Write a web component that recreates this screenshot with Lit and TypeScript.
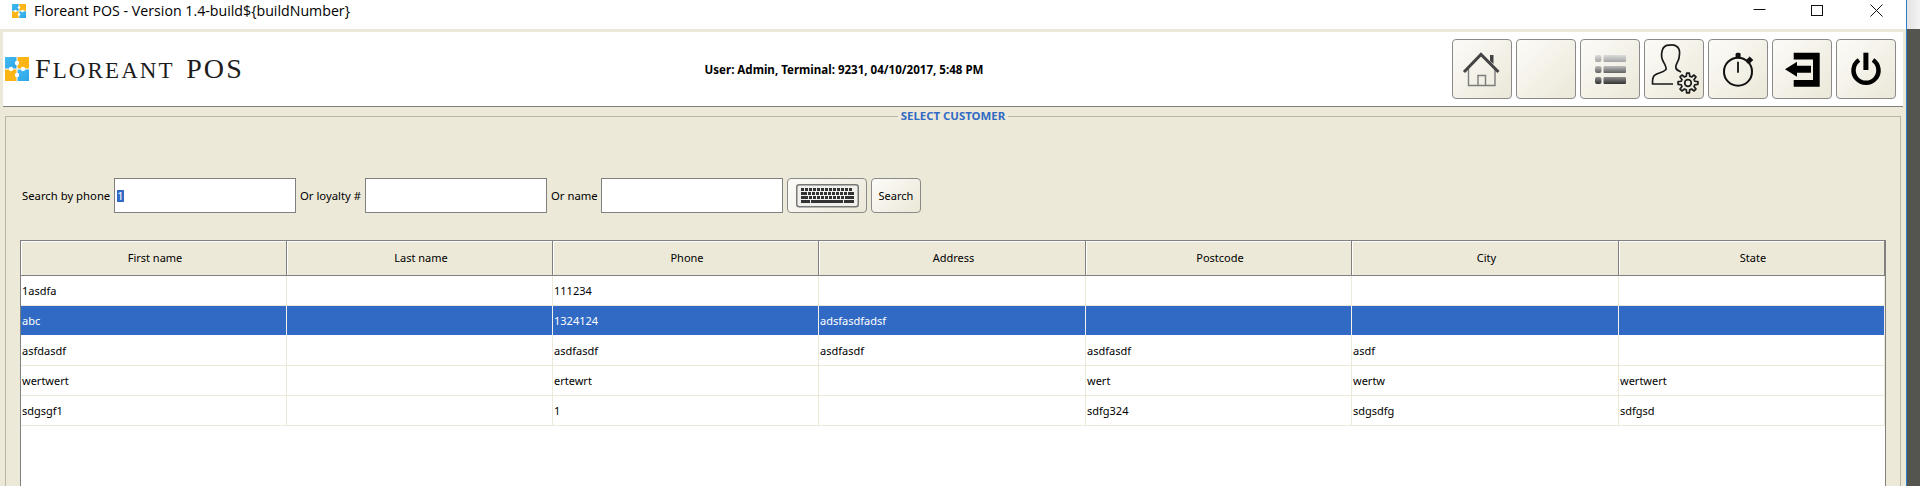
import { LitElement, html, svg, css } from "lit";
import { customElement } from "lit/decorators.js";
import { classMap } from "lit/directives/class-map.js";

const columns = ["First name", "Last name", "Phone", "Address", "Postcode", "City", "State"];

const customers = [
    ["1asdfa", "", "111234", "", "", "", ""],
    ["abc", "", "1324124", "adsfasdfadsf", "", "", ""],
    ["asfdasdf", "", "asdfasdf", "asdfasdf", "asdfasdf", "asdf", ""],
    ["wertwert", "", "ertewrt", "", "wert", "wertw", "wertwert"],
    ["sdgsgf1", "", "1", "", "sdfg324", "sdgsdfg", "sdfgsd"],
];

// gear outline for the user settings icon
function gearPath(cx: number, cy: number, inner: number, outer: number, teeth: number) {
    const points: string[] = [];
    const step = (Math.PI * 2) / teeth;
    for (let i = 0; i < teeth; i++) {
        const a = i * step - Math.PI / 2;
        const corners = [
            [a - step * 0.32, inner],
            [a - step * 0.17, outer],
            [a + step * 0.17, outer],
            [a + step * 0.32, inner],
        ];
        for (const [angle, radius] of corners) {
            points.push(`${(cx + Math.cos(angle) * radius).toFixed(2)} ${(cy + Math.sin(angle) * radius).toFixed(2)}`);
        }
    }
    return "M" + points.join("L") + "Z";
}

const logoMark = (size: number) => html`
    <svg width=${size} height=${size} viewBox="0 0 24 24">
        <defs>
            <linearGradient id="mark-blue" x1="0" y1="0" x2="1" y2="1">
                <stop offset="0" stop-color="#45b9f2"></stop>
                <stop offset="1" stop-color="#2aa5e6"></stop>
            </linearGradient>
        </defs>
        <rect x="0" y="0" width="12" height="12" fill="url(#mark-blue)"></rect>
        <rect x="12" y="0" width="12" height="12" fill="#fdb515"></rect>
        <rect x="0" y="12" width="12" height="12" fill="#fdb515"></rect>
        <rect x="12" y="12" width="12" height="12" fill="url(#mark-blue)"></rect>
        <path d="M12 0V24M0 12H24" stroke="#fff" stroke-width="1"></path>
        <circle cx="12" cy="6" r="2.2" fill="#fff"></circle>
        <circle cx="12" cy="18" r="2.2" fill="#fff"></circle>
        <circle cx="6" cy="12" r="2.2" fill="#fff"></circle>
        <circle cx="18" cy="12" r="2.2" fill="#fff"></circle>
    </svg>
`;

const homeIcon = svg`
    <path d="M16.5 30V46.5H43V30" fill="none" stroke="#7c7c7c" stroke-width="1.4"></path>
    <path d="M26 46.5V36.5H33.5V46.5" fill="none" stroke="#7c7c7c" stroke-width="1.4"></path>
    <path d="M38 16H41.5V25L38 22Z" fill="#444"></path>
    <path d="M12 33L29 15.5L46.5 33" fill="none" stroke="#444" stroke-width="3"></path>
`;

const listIcon = svg`
    <defs>
        <linearGradient id="bar-a" x1="0" y1="0" x2="0" y2="1"><stop offset="0" stop-color="#dcdcdc"></stop><stop offset="1" stop-color="#a4a4a4"></stop></linearGradient>
        <linearGradient id="bar-b" x1="0" y1="0" x2="0" y2="1"><stop offset="0" stop-color="#bdbdbd"></stop><stop offset="1" stop-color="#616161"></stop></linearGradient>
        <linearGradient id="bar-c" x1="0" y1="0" x2="0" y2="1"><stop offset="0" stop-color="#8d8d8d"></stop><stop offset="1" stop-color="#333"></stop></linearGradient>
    </defs>
    <rect x="15" y="16" width="6.5" height="7" rx="2" fill="url(#bar-a)"></rect>
    <rect x="23.5" y="16" width="22.5" height="7" rx="1" fill="url(#bar-a)"></rect>
    <rect x="15" y="27" width="6.5" height="7" rx="2" fill="url(#bar-b)"></rect>
    <rect x="23.5" y="27" width="22.5" height="7" rx="1" fill="url(#bar-b)"></rect>
    <rect x="15" y="38" width="6.5" height="7" rx="2" fill="url(#bar-c)"></rect>
    <rect x="23.5" y="38" width="22.5" height="7" rx="1" fill="url(#bar-c)"></rect>
`;

const userIcon = svg`
    <path d="M29 45H8.5C8.3 40 8.6 37.5 11 36C14 34 19 33.5 22 30.5C22.6 28 21 25.5 19.5 23C17.7 20 17.3 15 18.2 11.5C19.3 7.5 22.5 6 26 6.2C28.5 5.6 31 6 33.5 8C35.8 10 35.7 15.5 35 19C34.3 22.5 32.3 24.5 31.8 27.5C31.5 30.5 33.5 31.5 37 33"
        fill="none" stroke="#1a1a1a" stroke-width="1.7" stroke-linejoin="round"></path>
    <path d=${gearPath(44, 44, 7, 10, 8)} fill="none" stroke="#1a1a1a" stroke-width="1.7" stroke-linejoin="round"></path>
    <circle cx="44" cy="44" r="3.3" fill="none" stroke="#1a1a1a" stroke-width="1.7"></circle>
`;

const timerIcon = svg`
    <circle cx="30" cy="32.7" r="14" fill="none" stroke="#111" stroke-width="2"></circle>
    <rect x="27.6" y="13.7" width="5" height="5.5" rx="1.5" fill="#111"></rect>
    <path d="M39 24L42 21" stroke="#111" stroke-width="1.6"></path>
    <rect x="39.2" y="18.5" width="5" height="5" transform="rotate(45 41.7 21)" fill="#111"></rect>
    <path d="M30 22.7V33.7" stroke="#111" stroke-width="1.8"></path>
`;

const exitIcon = svg`
    <path d="M21.7 13.7H47.7V47.7H21.7V41H41V20.4H21.7Z" fill="#000"></path>
    <path d="M13 30.2L25 22.7V26.7H39V33.7H25V37.7Z" fill="#000"></path>
`;

const powerIcon = svg`
    <path d="M23 21A12.5 12.5 0 1 0 37 21" fill="none" stroke="#000" stroke-width="4.5"></path>
    <rect x="27.4" y="13.7" width="5" height="17.3" fill="#000"></rect>
`;

const navIcons = [homeIcon, null, listIcon, userIcon, timerIcon, exitIcon, powerIcon];

function keyRow(y: number, x: number, keys: number[]) {
    let left = x;
    return keys.map((w) => {
        const key = svg`<rect x=${left} y=${y} width=${w} height="3" fill="#333"></rect>`;
        left += w + 1;
        return key;
    });
}

const keyboardIcon = html`
    <svg width="63" height="24" viewBox="0 0 63 24">
        <rect x="0.75" y="0.75" width="61.5" height="22" rx="2.5" fill="#f1f0eb" stroke="#777" stroke-width="1.5"></rect>
        ${keyRow(4, 5, [3, 3, 3, 3, 3, 3, 3, 3, 3, 3, 3, 3, 3])}
        ${keyRow(8, 5, [6, 3, 3, 3, 3, 3, 3, 3, 3, 3, 3, 6])}
        ${keyRow(12, 5, [7, 3, 3, 3, 3, 3, 3, 3, 3, 3, 9])}
        ${keyRow(16, 5, [9, 32, 10])}
    </svg>
`;

@customElement("app-root")
export class AppRoot extends LitElement {
    static styles = css`
        :host {
            display: flex;
            width: 1920px;
            height: 486px;
            overflow: hidden;
            font-family: "Noto Sans", sans-serif;
            font-size: 11px;
            color: #000;
            background-color: #555550;
        }

        .window {
            display: flex;
            flex-direction: column;
            flex: none;
            width: 1906px;
            height: 486px;
            overflow: hidden;
            background-color: #ece9d8;
        }

        .edge {
            flex: none;
            width: 1px;
            background-color: #2b7fd0;
        }

        .desktop {
            flex: 1;
        }

        .desktop-top {
            height: 29px;
            background: linear-gradient(to right, #e2e2e2, #f4f4f4);
        }

        .title-bar {
            display: flex;
            align-items: center;
            flex: none;
            height: 21px;
            padding: 0px 0px 8px 12px;
            background-color: #fff;
            font-family: "Open Sans", sans-serif;
            font-size: 14.2px;
        }

        .title-bar span {
            margin-left: 8px;
            flex: 1;
        }

        .win-controls {
            display: flex;
            flex: none;
        }

        .win-controls svg {
            display: block;
        }

        .content {
            display: flex;
            flex-direction: column;
            flex: none;
            padding: 3px 3px 0px 3px;
        }

        .top-bar {
            display: grid;
            grid-template-columns: 700px 282px 1fr;
            align-items: center;
            height: 74px;
            background-color: #fff;
            border-bottom: 1px solid #808080;
        }

        .brand {
            display: flex;
            align-items: center;
            padding-left: 2px;
        }

        .wordmark {
            margin-left: 6px;
            font-family: "Liberation Serif", serif;
            font-size: 23px;
            letter-spacing: 2.1px;
            word-spacing: 4px;
            color: #1c1c1c;
            white-space: pre;
        }

        .wordmark b {
            font-weight: normal;
            font-size: 28px;
        }

        .status {
            text-align: center;
            font-size: 11.55px;
            font-weight: 700;
            white-space: nowrap;
        }

        .nav {
            display: flex;
            justify-content: flex-end;
            gap: 4px;
            padding-right: 7px;
        }

        .nav-button, .tool-button {
            padding: 0px;
            border: 1px solid #8a8a8a;
            border-radius: 4px;
            background: linear-gradient(135deg, #fcfbf8, #ebe8d8);
            font: inherit;
            color: inherit;
        }

        .nav-button {
            width: 60px;
            height: 60px;
        }

        .nav-button svg {
            display: block;
            margin: -1px;
        }

        .group {
            min-width: 0px;
            height: 420px;
            margin: 2px 2px 0px 2px;
            padding: 55px 14px 0px 14px;
            border: 1px solid #b9b8a8;
        }

        .group legend {
            margin: 0px auto;
            padding: 0px 3px;
            line-height: 14px;
            font-size: 11.4px;
            font-weight: 700;
            color: #316ac5;
        }

        .search {
            display: grid;
            grid-template-columns: 88px 182px 61px 182px 46px 182px 80px 50px;
            gap: 4px;
            align-items: center;
            height: 35px;
            padding-left: 2px;
        }

        .search label {
            font-size: 11.3px;
            white-space: nowrap;
        }

        .field {
            box-sizing: border-box;
            display: flex;
            align-items: center;
            height: 35px;
            padding-left: 2px;
            border: 1px solid #808080;
            background-color: #fff;
        }

        .field mark {
            display: block;
            width: 7px;
            height: 12px;
            line-height: 12px;
            text-align: center;
            background-color: #316ac5;
            color: #fff;
        }

        .tool-button {
            display: flex;
            align-items: center;
            justify-content: center;
            height: 35px;
        }

        .table {
            box-sizing: border-box;
            height: 300px;
            margin-top: 27px;
            border: 1px solid #808080;
            background-color: #fff;
        }

        .row {
            display: grid;
            grid-template-columns: 266px 266px 266px 267px 266px 267px 1fr;
        }

        .head {
            height: 35px;
            background-color: #ece9d8;
            border-bottom: 1px solid #808080;
            box-sizing: border-box;
        }

        .head div {
            display: flex;
            align-items: center;
            justify-content: center;
            padding: 0px 0px 1px 3px;
            border-right: 1px solid #808080;
            box-shadow: inset 1px 1px 0px #fff;
        }

        .cells {
            height: 30px;
            box-sizing: border-box;
            border-bottom: 1px solid #ece9d8;
        }

        .cells div {
            display: flex;
            align-items: center;
            padding-left: 1px;
            overflow: hidden;
            border-right: 1px solid #ece9d8;
        }

        .cells.selected {
            background-color: #316ac5;
            color: #fff;
            border-bottom-color: #fff;
        }

        .cells.selected div {
            border-right-color: #f4f2e8;
        }
    `;

    render() {
        return html`
            <div class="window">
                <div class="title-bar">
                    ${logoMark(14)}
                    <span>Floreant POS - Version 1.4-build\${buildNumber}</span>
                    <div class="win-controls">
                        <svg width="153" height="21" viewBox="0 0 153 21">
                            <path d="M0.5 9.5H12.5" stroke="#111" fill="none"></path>
                            <rect x="58.5" y="5.5" width="11" height="10" stroke="#111" fill="none"></rect>
                            <path d="M117.5 4.5L129.5 16.5M129.5 4.5L117.5 16.5" stroke="#111" fill="none"></path>
                        </svg>
                    </div>
                </div>
                <div class="content">
                    <div class="top-bar">
                        <div class="brand">
                            ${logoMark(24)}
                            <div class="wordmark"><b>F</b>LOREANT <b>POS</b></div>
                        </div>
                        <div class="status">User: Admin, Terminal: 9231, 04/10/2017, 5:48 PM</div>
                        <div class="nav">
                            ${navIcons.map((icon) => html`
                                <button class="nav-button">
                                    <svg width="60" height="60" viewBox="0 0 60 60">${icon}</svg>
                                </button>
                            `)}
                        </div>
                    </div>
                    <fieldset class="group">
                        <legend>SELECT CUSTOMER</legend>
                        <div class="search">
                            <label>Search by phone</label>
                            <div class="field"><mark>1</mark></div>
                            <label>Or loyalty #</label>
                            <div class="field"></div>
                            <label>Or name</label>
                            <div class="field"></div>
                            <button class="tool-button">${keyboardIcon}</button>
                            <button class="tool-button">Search</button>
                        </div>
                        <div class="table">
                            <div class="row head">
                                ${columns.map((name) => html`<div>${name}</div>`)}
                            </div>
                            ${customers.map((customer, index) => html`
                                <div class="row cells ${classMap({ selected: index === 1 })}">
                                    ${customer.map((value) => html`<div>${value}</div>`)}
                                </div>
                            `)}
                        </div>
                    </fieldset>
                </div>
            </div>
            <div class="edge"></div>
            <div class="desktop">
                <div class="desktop-top"></div>
            </div>
        `;
    }
}
